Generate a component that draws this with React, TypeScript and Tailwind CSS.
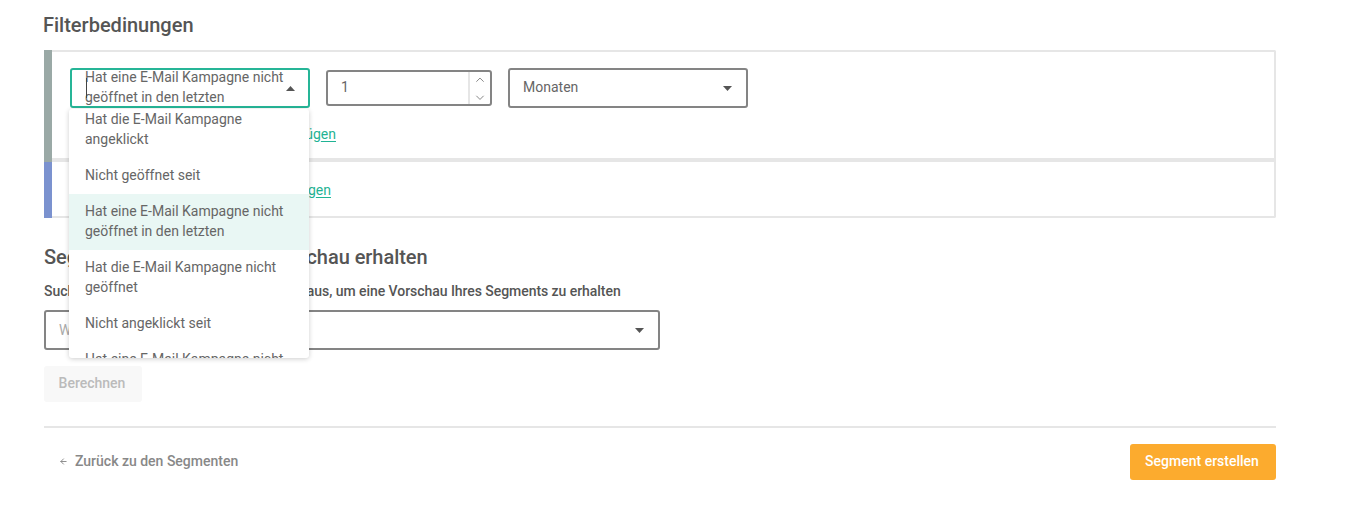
import React from 'react';
import { ChevronUp, ChevronDown, ArrowLeft } from 'lucide-react';

const options = [
  { label: 'Hat die E-Mail Kampagne angeklickt' },
  { label: 'Nicht geöffnet seit' },
  { label: 'Hat eine E-Mail Kampagne nicht geöffnet in den letzten', active: true },
  { label: 'Hat die E-Mail Kampagne nicht geöffnet' },
  { label: 'Nicht angeklickt seit' },
  { label: 'Hat eine E-Mail Kampagne nicht angeklickt in den letzten' },
];

const Caret = ({ up = false }: { up?: boolean }) => (
  <svg width="9" height="5" viewBox="0 0 9 5" className="shrink-0">
    <path d={up ? 'M0 5 L4.5 0 L9 5 Z' : 'M0 0 L9 0 L4.5 5 Z'} fill="#555" />
  </svg>
);

const AddLink = ({ text, width }: { text: string; width: string }) => (
  <div className={`flex justify-end whitespace-nowrap text-[14px] leading-5 text-[#1fb394] ${width}`}>
    <span>
      {text}
      <span className="underline underline-offset-2">en</span>
    </span>
  </div>
);

export default function App() {
  return (
    <div className="relative h-[522px] w-[1356px] overflow-hidden bg-white pr-[80px] pl-[44px] font-['Roboto',sans-serif] text-[14px] text-[#666] antialiased">
      <h2 className="-ml-[1px] pt-[14px] text-[20px] leading-[22px] font-medium text-[#555]">Filterbedinungen</h2>

      <div className="mt-[14px] flex flex-col">
        <div className="flex h-[112px] border-l-[8px] border-[#9aa9a6]">
          <div className="flex-1 rounded-tr-[2px] border-2 border-b-[4px] border-l-0 border-[#e6e6e6] pt-[16px] pl-[18px]">
            <div className="flex items-center gap-[16px]">
              <div className="flex h-[40px] w-[240px] items-center justify-between rounded-[3px] border-2 border-[#26b597] pr-[13px] pl-[13px]">
                <span className="-mt-[2px] w-[204px] leading-5">Hat eine E-Mail Kampagne nicht geöffnet in den letzten</span>
                <Caret up />
              </div>
              <div className="flex h-[36px] w-[166px] items-stretch rounded-[3px] border-2 border-[#848484]">
                <span className="flex flex-1 items-center pb-[2px] pl-[13px]">1</span>
                <div className="flex w-[22px] flex-col items-center gap-[4px] border-l-2 border-[#e6e6e6] pt-[1px] text-[#666]">
                  <ChevronUp size={14} strokeWidth={1.4} />
                  <ChevronDown size={14} strokeWidth={1.4} />
                </div>
              </div>
              <div className="flex h-[40px] w-[240px] items-center justify-between rounded-[3px] border-2 border-[#848484] pr-[14px] pl-[13px]">
                <span className="pb-[2px]">Monaten</span>
                <Caret />
              </div>
            </div>
            <div className="mt-[16px]">
              <AddLink text="Eine weitere UND-Bedingung hinzufüg" width="w-[266px]" />
            </div>
          </div>
        </div>
        <div className="flex h-[56px] border-l-[8px] border-[#7b92cf]">
          <div className="flex-1 rounded-br-[2px] border-2 border-t-0 border-l-0 border-[#e6e6e6] pt-[18px] pl-[18px]">
            <AddLink text="Weitere ODER-Bedingung hinzufüg" width="w-[261px]" />
          </div>
        </div>
      </div>

      <h2 className="mt-[28px] text-[20px] leading-[22px] font-medium tracking-[-0.05px] text-[#555]">Segment berechnen und Vorschau erhalten</h2>
      <p className="mt-[13px] text-[14px] leading-5 font-medium tracking-[-0.05px] whitespace-nowrap text-[#555]">
        Suchen Sie einen Kontakt aus dieser Liste aus, um eine Vorschau Ihres Segments zu erhalten
      </p>
      <div className="mt-[9px] flex h-[40px] w-[616px] items-center justify-between rounded-[3px] border-2 border-[#848484] pr-[14px] pl-[13px]">
        <span className="text-[#aaa]">Wählen Sie einen Kontakt</span>
        <Caret />
      </div>
      <button className="mt-[16px] block h-[36px] w-[98px] rounded-[3px] bg-[#f8f8f8] pr-[2px] pb-[2px] text-[14px] font-medium text-[#bbb]">Berechnen</button>

      <div className="mt-[24px] h-[2px] bg-[#e6e6e6]" />
      <div className="mt-[16px] flex items-center justify-between">
        <div className="flex items-center gap-[7px] pb-[2px] pl-[15px] text-[14px] font-medium text-[#888]">
          <ArrowLeft size={9} strokeWidth={2.5} />
          <span>Zurück zu den Segmenten</span>
        </div>
        <button className="h-[36px] w-[146px] rounded-[3px] bg-[#fcab2e] pr-[2px] pb-[2px] text-[14px] font-medium text-white">Segment erstellen</button>
      </div>

      {/* Text cursor in the open select */}
      <div className="absolute top-[78px] left-[86px] h-[20px] w-[1px] bg-[#444]" />

      {/* Open dropdown */}
      <div className="absolute top-[109px] left-[69px] h-[249px] w-[240px] overflow-hidden rounded-[3px] bg-white shadow-[0_1px_5px_rgba(0,0,0,0.2)]">
        <div className="-mt-[7px]">
          {options.map((opt) => (
            <div key={opt.label} className={`px-[16px] pt-[7px] pb-[9px] leading-5 ${opt.active ? 'bg-[#e9f7f4]' : ''}`}>
              {opt.label}
            </div>
          ))}
        </div>
      </div>
    </div>
  );
}
